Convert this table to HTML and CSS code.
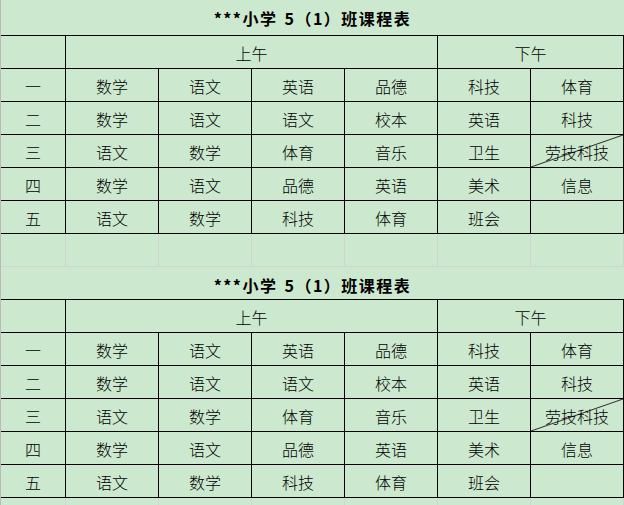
FILE: index.html
```html
<!DOCTYPE html>
<html lang="zh-CN">
<head>
<meta charset="utf-8">
<title>课程表</title>
<link rel="stylesheet" href="styles.css">
</head>
<body>
<div class="sheet">
  <div class="title first">***小学<span class="gap"></span>5（1）班课程表</div>
  <div class="grid">
    <div class="cell"></div>
    <div class="cell span4">上午</div>
    <div class="cell span2">下午</div>

    <div class="cell">一</div>
    <div class="cell">数学</div><div class="cell">语文</div><div class="cell">英语</div><div class="cell">品德</div><div class="cell">科技</div><div class="cell">体育</div>

    <div class="cell">二</div>
    <div class="cell">数学</div><div class="cell">语文</div><div class="cell">语文</div><div class="cell">校本</div><div class="cell">英语</div><div class="cell">科技</div>

    <div class="cell">三</div>
    <div class="cell">语文</div><div class="cell">数学</div><div class="cell">体育</div><div class="cell">音乐</div><div class="cell">卫生</div><div class="cell diag">劳技科技</div>

    <div class="cell">四</div>
    <div class="cell">数学</div><div class="cell">语文</div><div class="cell">品德</div><div class="cell">英语</div><div class="cell">美术</div><div class="cell">信息</div>

    <div class="cell">五</div>
    <div class="cell">语文</div><div class="cell">数学</div><div class="cell">科技</div><div class="cell">体育</div><div class="cell">班会</div><div class="cell"></div>
  </div>

  <div class="blank">
    <div></div><div></div><div></div><div></div><div></div><div></div><div></div>
  </div>

  <div class="title">***小学<span class="gap"></span>5（1）班课程表</div>
  <div class="grid">
    <div class="cell"></div>
    <div class="cell span4">上午</div>
    <div class="cell span2">下午</div>

    <div class="cell">一</div>
    <div class="cell">数学</div><div class="cell">语文</div><div class="cell">英语</div><div class="cell">品德</div><div class="cell">科技</div><div class="cell">体育</div>

    <div class="cell">二</div>
    <div class="cell">数学</div><div class="cell">语文</div><div class="cell">语文</div><div class="cell">校本</div><div class="cell">英语</div><div class="cell">科技</div>

    <div class="cell">三</div>
    <div class="cell">语文</div><div class="cell">数学</div><div class="cell">体育</div><div class="cell">音乐</div><div class="cell">卫生</div><div class="cell diag">劳技科技</div>

    <div class="cell">四</div>
    <div class="cell">数学</div><div class="cell">语文</div><div class="cell">品德</div><div class="cell">英语</div><div class="cell">美术</div><div class="cell">信息</div>

    <div class="cell">五</div>
    <div class="cell">语文</div><div class="cell">数学</div><div class="cell">科技</div><div class="cell">体育</div><div class="cell">班会</div><div class="cell"></div>
  </div>

  <div class="blank last">
    <div></div><div></div><div></div><div></div><div></div><div></div><div></div>
  </div>
</div>
</body>
</html>
```

FILE: styles.css
```css
html, body {
  margin: 0;
  padding: 0;
  background: #cce8cf;
}

body {
  font-family: "Noto Sans CJK SC", "Noto Sans", sans-serif;
  font-size: 16px;
  font-weight: 300;
  color: #000;
  overflow: hidden;
}

.sheet {
  width: 623px;
  height: 505px;
  border-left: 1px solid #b9b9b9;
  background: #cce8cf;
  display: flex;
  flex-direction: column;
}

.title {
  box-sizing: border-box;
  height: 33px;
  border-bottom: 1px solid #000;
  display: flex;
  align-items: center;
  justify-content: center;
  padding-top: 3px;
  font-weight: bold;
  letter-spacing: 1.5px;
  flex: none;
}

.title .gap {
  display: inline-block;
  width: 7px;
}

.title.first {
  height: 36px;
  padding-top: 0;
}

.grid {
  display: grid;
  grid-template-columns: 65px repeat(6, 93px);
  grid-auto-rows: 33px;
  flex: none;
}

.cell {
  box-sizing: border-box;
  border-right: 1px solid #000;
  border-bottom: 1px solid #000;
  display: flex;
  align-items: center;
  justify-content: center;
  padding-top: 2px;
  line-height: 1;
}

.span4 { grid-column: span 4; }
.span2 { grid-column: span 2; }

.diag {
  background: linear-gradient(to bottom right,
    transparent calc(50% - 1px),
    #333 50%,
    transparent calc(50% + 1px));
}

.blank {
  display: grid;
  grid-template-columns: 65px repeat(6, 93px);
  height: 33px;
  flex: none;
}

.blank > div {
  box-sizing: border-box;
  border-right: 1px solid #d2d2d2;
  border-bottom: 1px solid #d2d2d2;
}

.blank.last {
  flex: 1;
}

.blank.last > div {
  border-bottom: none;
}
```
